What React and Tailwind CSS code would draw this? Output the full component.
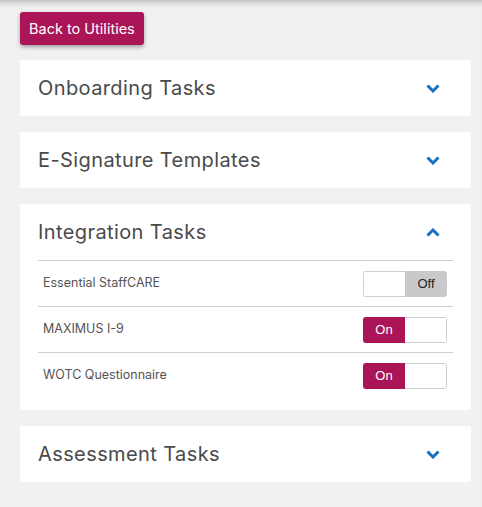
const font = { fontFamily: 'Inter, "Noto Sans", sans-serif' };

function Chevron({ up }) {
  return (
    <svg width="14" height="9" viewBox="0 0 14 9" className="mr-[13px]">
      <polyline
        points={up ? '1.5,7.5 7,2 12.5,7.5' : '1.5,1.5 7,7 12.5,1.5'}
        fill="none"
        stroke="#1b6fc2"
        strokeWidth="3"
      />
    </svg>
  );
}

function Toggle({ on }) {
  return (
    <div className="flex h-[26px] w-[84px] overflow-hidden rounded-[3px] text-[13px]" style={{ fontFamily: '"Liberation Sans", Arial, sans-serif' }}>
      {on ? (
        <>
          <div className="flex w-[42px] items-center justify-center bg-[#ab1457] text-white">On</div>
          <div className="flex-1 border border-l-0 border-[#cfcfcf] bg-white" />
        </>
      ) : (
        <>
          <div className="w-[42px] border border-r-0 border-[#cfcfcf] bg-white" />
          <div className="flex flex-1 items-center justify-center bg-[#c9c9c9] text-[#222]">Off</div>
        </>
      )}
    </div>
  );
}

function Section({ title, open, children }) {
  return (
    <div className="rounded-[2px] bg-white px-[18px]">
      <div className="flex h-[56px] items-center justify-between">
        <h2 className="text-[20px] tracking-[0.4px] text-[#4a4a4a]">{title}</h2>
        <Chevron up={open} />
      </div>
      {open && <div className="pb-[12px]">{children}</div>}
    </div>
  );
}

const tasks = [
  { name: 'Essential StaffCARE', on: false },
  { name: 'MAXIMUS I-9', on: true },
  { name: 'WOTC Questionnaire', on: true },
];

export default function App() {
  return (
    <div className="min-h-screen bg-[#f1f1f1] pb-6 pl-5 pr-[11px] pt-3 shadow-[inset_0_7px_6px_-5px_rgba(0,0,0,0.25)]" style={font}>
      <button className="h-[33px] rounded-[3px] bg-[#ab1457] px-[9px] text-[14.5px] text-white shadow-[0_2px_4px_rgba(0,0,0,0.35)]">
        Back to Utilities
      </button>
      <div className="mt-[15px] flex flex-col gap-4">
        <Section title="Onboarding Tasks" />
        <Section title="E-Signature Templates" />
        <Section title="Integration Tasks" open>
          {tasks.map((t) => (
            <div key={t.name} className="flex h-[46px] items-center justify-between border-t border-[#cfcfcf] pl-[5px] pr-[6px]">
              <span className="text-[12.5px] text-[#555]">{t.name}</span>
              <Toggle on={t.on} />
            </div>
          ))}
        </Section>
        <Section title="Assessment Tasks" />
      </div>
    </div>
  );
}
